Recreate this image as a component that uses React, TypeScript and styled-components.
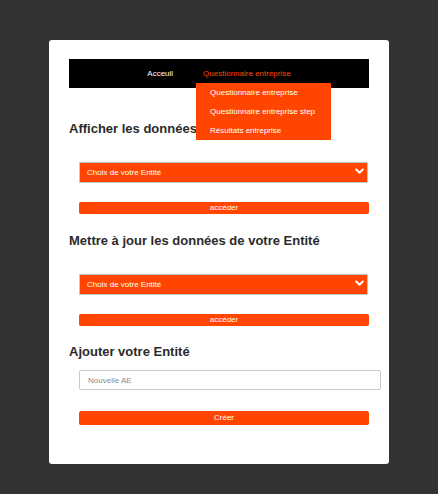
import React from "react";
import styled, { createGlobalStyle } from "styled-components";

const Global = createGlobalStyle`
  html, body { margin: 0; padding: 0; background: #333333; }
  body { font-family: "Liberation Sans", Arial, sans-serif; }
  * { box-sizing: border-box; }
`;

const Page = styled.div`
  padding: 40px 0 30px 49px;
`;

const Card = styled.div`
  width: 340px;
  background: #ffffff;
  border-radius: 3px;
  padding: 19px 20px 39px 20px;
  display: flex;
  flex-direction: column;
`;

const Nav = styled.nav`
  height: 29px;
  background: #000000;
  display: flex;
  justify-content: center;
  align-items: center;
  gap: 30px;
  margin-bottom: 33px;
`;

const NavItem = styled.div<{ $active?: boolean }>`
  position: relative;
  font-size: 8px;
  color: ${(p) => (p.$active ? "#ff4500" : "#ffffff")};
  line-height: 10px;
`;

const Menu = styled.div`
  position: absolute;
  left: -7px;
  top: 14px;
  width: 135px;
  background: #ff4500;
  display: flex;
  flex-direction: column;
  z-index: 2;
`;

const MenuItem = styled.div`
  height: 19px;
  line-height: 19px;
  padding-left: 14px;
  font-size: 8px;
  color: #ffffff;
  white-space: nowrap;
`;

const Heading = styled.h2<{ $gap: number }>`
  margin: 0 0 ${(p) => p.$gap}px 0;
  font-size: 13px;
  line-height: 16px;
  font-weight: 700;
  color: #2b2b2b;
`;

const Field = styled.div`
  margin-left: 10px;
  display: flex;
  flex-direction: column;
`;

const SelectWrap = styled.div`
  position: relative;
  width: 289px;
  height: 21px;
  margin-bottom: 20px;
`;

const Select = styled.select`
  appearance: none;
  -webkit-appearance: none;
  width: 100%;
  height: 100%;
  background: #ff4500;
  color: #ffffff;
  border: 1px solid #c8c8c8;
  border-radius: 0;
  font-family: "Liberation Sans", Arial, sans-serif;
  font-size: 8px;
  padding: 0 0 0 7px;
  outline: none;
`;

const Chevron = styled.svg`
  position: absolute;
  right: 4px;
  top: 7px;
  width: 9px;
  height: 7px;
  pointer-events: none;
`;

const Button = styled.button<{ $h: number; $gap: number }>`
  width: 290px;
  height: ${(p) => p.$h}px;
  background: #ff4500;
  color: #ffffff;
  border: none;
  border-radius: 2px;
  font-family: "Liberation Sans", Arial, sans-serif;
  font-size: 8px;
  padding: 0;
  margin-bottom: ${(p) => p.$gap}px;
  line-height: ${(p) => p.$h}px;
`;

const Input = styled.input`
  width: 302px;
  height: 20px;
  border: 1px solid #c8c8c8;
  border-radius: 2px;
  padding: 0 0 0 8px;
  font-family: "Liberation Sans", Arial, sans-serif;
  font-size: 8px;
  margin-bottom: 21px;
  outline: none;
  &::placeholder { color: #8a8a8a; }
`;

const EntitySelect = () => (
  <SelectWrap>
    <Select defaultValue="">
      <option value="">Choix de votre Entité</option>
    </Select>
    <Chevron viewBox="0 0 9 7">
      <path d="M1.2 1.5 L4.5 4.8 L7.8 1.5" fill="none" stroke="#ffffff" strokeWidth="2" strokeLinecap="round" strokeLinejoin="round" />
    </Chevron>
  </SelectWrap>
);

export default function App() {
  return (
    <>
      <Global />
      <Page>
        <Card>
          <Nav>
            <NavItem>Acceuil</NavItem>
            <NavItem $active>
              Questionnaire entreprise
              <Menu>
                <MenuItem>Questionnaire entreprise</MenuItem>
                <MenuItem>Questionnaire entreprise step</MenuItem>
                <MenuItem>Résultats entreprise</MenuItem>
              </Menu>
            </NavItem>
          </Nav>

          <Heading $gap={24}>Afficher les données de votre Entité</Heading>
          <Field>
            <EntitySelect />
            <Button $h={12} $gap={19}>accéder</Button>
          </Field>

          <Heading $gap={24}>Mettre à jour les données de votre Entité</Heading>
          <Field>
            <EntitySelect />
            <Button $h={12} $gap={18}>accéder</Button>
          </Field>

          <Heading $gap={10}>Ajouter votre Entité</Heading>
          <Field>
            <Input placeholder="Nouvelle AE" />
            <Button $h={14} $gap={0}>Créer</Button>
          </Field>
        </Card>
      </Page>
    </>
  );
}
